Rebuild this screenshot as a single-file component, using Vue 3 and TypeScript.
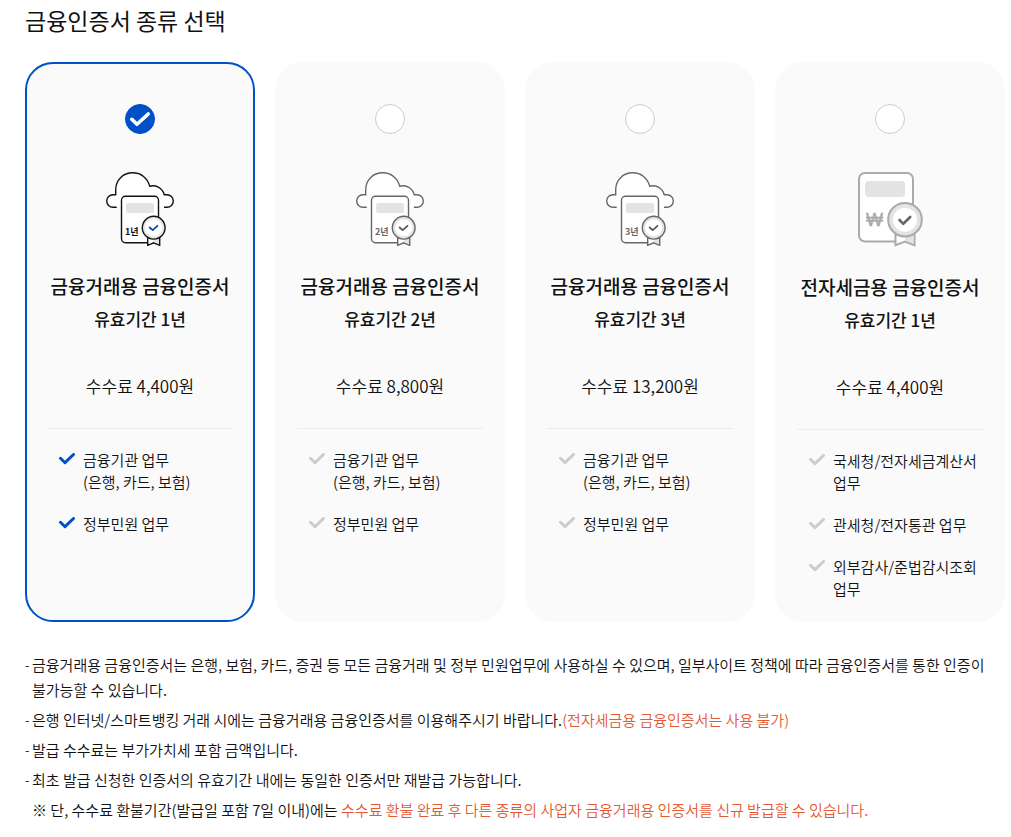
<script setup lang="ts">
import { ref } from 'vue'

interface Certificate {
  id: string
  title: string
  years: number
  fee: string
  tax: boolean
  uses: string[][]
}

interface Note {
  marker: string
  text: string
  warning?: string
}

const bankUses: string[][] = [['금융기관 업무', '(은행, 카드, 보험)'], ['정부민원 업무']]

const certificates: Certificate[] = [
  { id: 'bank1', title: '금융거래용 금융인증서', years: 1, fee: '4,400', tax: false, uses: bankUses },
  { id: 'bank2', title: '금융거래용 금융인증서', years: 2, fee: '8,800', tax: false, uses: bankUses },
  { id: 'bank3', title: '금융거래용 금융인증서', years: 3, fee: '13,200', tax: false, uses: bankUses },
  {
    id: 'tax1',
    title: '전자세금용 금융인증서',
    years: 1,
    fee: '4,400',
    tax: true,
    uses: [['국세청/전자세금계산서', '업무'], ['관세청/전자통관 업무'], ['외부감사/준법감시조회', '업무']],
  },
]

const notes: Note[] = [
  {
    marker: '-',
    text: '금융거래용 금융인증서는 은행, 보험, 카드, 증권 등 모든 금융거래 및 정부 민원업무에 사용하실 수 있으며, 일부사이트 정책에 따라 금융인증서를 통한 인증이 불가능할 수 있습니다.',
  },
  {
    marker: '-',
    text: '은행 인터넷/스마트뱅킹 거래 시에는 금융거래용 금융인증서를 이용해주시기 바랍니다.',
    warning: '(전자세금용 금융인증서는 사용 불가)',
  },
  { marker: '-', text: '발급 수수료는 부가가치세 포함 금액입니다.' },
  { marker: '-', text: '최초 발급 신청한 인증서의 유효기간 내에는 동일한 인증서만 재발급 가능합니다.' },
  {
    marker: '',
    text: '※ 단, 수수료 환불기간(발급일 포함 7일 이내)에는 ',
    warning: '수수료 환불 완료 후 다른 종류의 사업자 금융거래용 인증서를 신규 발급할 수 있습니다.',
  },
]

const selected = ref('bank1')
</script>

<template>
  <main class="page">
    <h1 class="heading">금융인증서 종류 선택</h1>

    <div class="cards" role="radiogroup" aria-label="금융인증서 종류 선택">
      <label
        v-for="cert in certificates"
        :key="cert.id"
        class="card"
        :class="{ selected: selected === cert.id }"
      >
        <span class="pick">
          <input v-model="selected" class="radio" type="radio" name="certificate" :value="cert.id" />
          <svg v-if="selected === cert.id" class="tick" viewBox="0 0 30 30" aria-hidden="true">
            <path d="M6.8 15.3 12 20.3 23.2 10" />
          </svg>
        </span>

        <svg v-if="cert.tax" class="art tax" viewBox="0 0 70 75" aria-hidden="true">
          <rect class="paper" x="4" y="1" width="54" height="68.5" rx="6" />
          <rect class="bar" x="10" y="9" width="40" height="16" rx="4" />
          <text class="won" x="11" y="54">₩</text>
          <path class="paper" d="M40.5 60V73.3L50 69.5 59.5 73.3V60Z" />
          <path class="bar" d="M50 62H58.5V71.8L50 68.5Z" />
          <circle class="seal" cx="50" cy="47.7" r="16.8" />
          <circle class="face" cx="50" cy="47.7" r="12" />
          <path class="mark" d="M44.5 48 48.3 51.8 55.2 45" />
        </svg>
        <svg v-else class="art" viewBox="0 0 70 74" aria-hidden="true">
          <path
            class="paper"
            d="M11.7 35.3H8A6.3 6.3 0 0 1 8 22.7H10.7V18C10.7 8 18 .8 27.7 .8 36 .8 42.6 6 44.7 14.2 50.5 12.8 57 15.5 59.3 22.7H62A6.3 6.3 0 0 1 62 35.3H59"
          />
          <rect class="paper" x="16.5" y="24.2" width="37" height="46.6" rx="4" />
          <rect class="bar" x="21" y="31" width="28" height="10" rx="2" />
          <text class="term" x="20" y="63">{{ cert.years }}년</text>
          <path class="paper" d="M42.7 65V73.3L48.7 70.8 54.7 73.3V65Z" />
          <path class="bar" d="M48.7 66H54V71.8L48.7 70Z" />
          <circle class="seal" cx="48.7" cy="55.7" r="11.4" />
          <circle class="face" cx="48.7" cy="55.7" r="8.6" />
          <path class="mark" d="M44.6 55.5 47.7 58.2 52.5 53.8" />
        </svg>

        <span class="title">{{ cert.title }}</span>
        <span class="valid">유효기간 {{ cert.years }}년</span>
        <span class="fee">수수료 {{ cert.fee }}원</span>

        <ul class="uses">
          <li v-for="use in cert.uses" :key="use[0]" class="use">
            <svg class="check" viewBox="0 0 16 12" aria-hidden="true">
              <path d="M1.5 5.3 6 9.7 14.5 1.5" />
            </svg>
            <span>
              <span v-for="line in use" :key="line" class="line">{{ line }}</span>
            </span>
          </li>
        </ul>
      </label>
    </div>

    <ul class="notes">
      <li v-for="note in notes" :key="note.text" class="note">
        <span class="marker">{{ note.marker }}</span>
        <span>{{ note.text }}<span v-if="note.warning" class="warning">{{ note.warning }}</span></span>
      </li>
    </ul>
  </main>
</template>

<style>
body {
  margin: 0;
  background: #fff;
}
</style>

<style scoped>
.page {
  padding: 3px 6px 14px 25px;
  color: #111;
  font-family: 'Noto Sans CJK KR', 'Noto Sans', sans-serif;
  font-size: 15px;
  font-weight: 350;
  word-break: keep-all;
}

.heading {
  margin: 0 0 25px;
  font-size: 23px;
  font-weight: 400;
  line-height: 34px;
}

.cards {
  display: grid;
  grid-template-columns: repeat(4, minmax(0, 1fr));
  gap: 20px;
}

.card {
  display: flex;
  flex-direction: column;
  align-items: center;
  padding: 40px 20px 20px;
  border: 2px solid #fafafa;
  border-radius: 28px;
  background: #fafafa;
  cursor: pointer;
}

.card.selected {
  border-color: #0050c8;
}

.pick {
  display: grid;
  margin-bottom: 38px;
}

.radio,
.tick {
  grid-area: 1 / 1;
  width: 30px;
  height: 30px;
}

.radio {
  appearance: none;
  margin: 0;
  border: 1px solid #ccc;
  border-radius: 50%;
  background: #fff;
  cursor: pointer;
}

.radio:checked {
  border-color: #0050c8;
  background: #0050c8;
}

.tick {
  fill: none;
  stroke: #fff;
  stroke-width: 3.6;
  stroke-linecap: round;
  stroke-linejoin: round;
  pointer-events: none;
}

.art {
  --ink: #666;
  --mark: #555;
  --seal: #e3e3e3;
  width: 70px;
  height: 74px;
  margin-bottom: 26px;
}

.selected .art {
  --ink: #111;
  --mark: #0046c8;
  --seal: #e8e8e8;
}

.art.tax {
  --ink: #aaa;
  --mark: #666;
  --seal: #e3e3e3;
  height: 75px;
}

.paper {
  fill: #fff;
  stroke: var(--ink);
  stroke-width: 1.4;
}

.bar {
  fill: #e3e3e3;
}

.seal {
  fill: var(--seal);
  stroke: var(--ink);
  stroke-width: 1.4;
}

.tax .paper,
.tax .seal {
  stroke-width: 2;
}

.face {
  fill: #fff;
}

.mark {
  fill: none;
  stroke: var(--mark);
  stroke-width: 1.7;
  stroke-linecap: round;
  stroke-linejoin: round;
}

.tax .mark {
  stroke-width: 2.6;
}

.term {
  fill: var(--ink);
  font-size: 9px;
  font-weight: 700;
}

.won {
  fill: var(--ink);
  stroke: var(--ink);
  stroke-width: 0.5;
  font-family: 'Liberation Sans', sans-serif;
  font-size: 18px;
  font-weight: 400;
}

.title {
  margin-bottom: 7px;
  font-size: 19px;
  font-weight: 500;
  line-height: 28px;
  white-space: nowrap;
}

.valid {
  margin-bottom: 43px;
  font-size: 17px;
  font-weight: 500;
  line-height: 24px;
}

.fee {
  margin-bottom: 30px;
  font-size: 17px;
  line-height: 24px;
}

.uses {
  display: flex;
  flex-direction: column;
  gap: 20px;
  align-self: stretch;
  margin: 0;
  padding: 20px 0 0 12px;
  border-top: 1px solid #ececf0;
  line-height: 22px;
  list-style: none;
}

.use {
  display: flex;
  gap: 8px;
}

.check {
  flex: none;
  width: 16px;
  height: 12px;
  margin-top: 4px;
  fill: none;
  stroke: #ccc;
  stroke-width: 3;
  stroke-linecap: round;
  stroke-linejoin: round;
}

.selected .check {
  stroke: #0050c8;
}

.line {
  display: block;
}

.notes {
  display: flex;
  flex-direction: column;
  gap: 5px;
  margin: 30px 0 0;
  padding: 0;
  line-height: 25px;
  list-style: none;
}

.note {
  display: flex;
}

.marker {
  flex: none;
  width: 7px;
  font-size: 13px;
}

.warning {
  color: #e55a35;
}
</style>
